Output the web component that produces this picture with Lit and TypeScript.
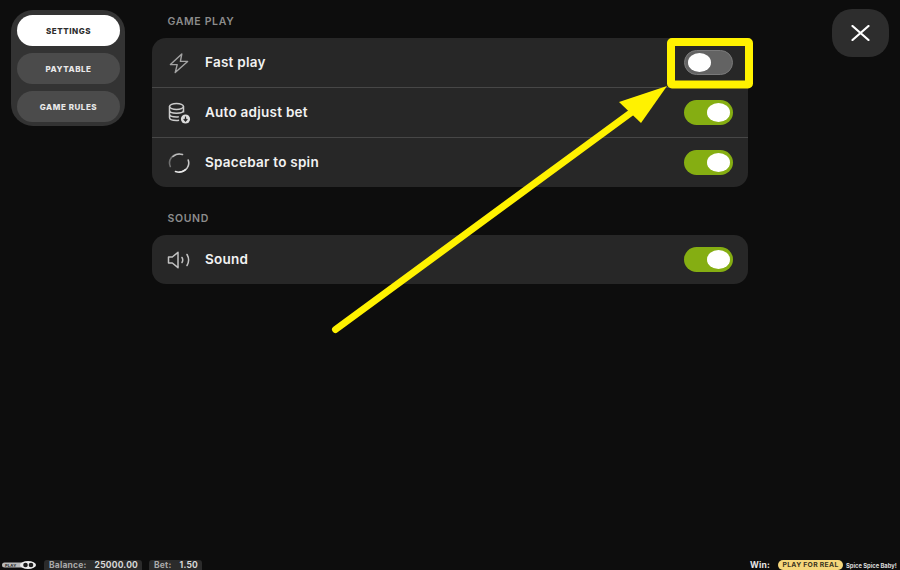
import { LitElement, html, css, svg } from "lit";
import { customElement } from "lit/decorators.js";

const boltIcon = svg`<svg class="icon" viewBox="0 0 24 24" fill="none" stroke="#a3a3a3" stroke-width="1.4" stroke-linejoin="round"><path d="M14.800 3 3.400 13.600h6.800L8.200 21.600 20.600 10.400h-7.200z"/></svg>`;
const coinsIcon = svg`<svg class="icon" viewBox="0 0 24 24" fill="none" stroke="#cccccc" stroke-width="1.500"><ellipse cx="9.500" cy="5.500" rx="7" ry="3"/><path d="M2.500 5.500v11c0 1.700 3.100 3 7 3 .9 0 1.800-.1 2.600-.2M16.500 5.500v6M2.500 9.200c0 1.700 3.100 3 7 3s7-1.300 7-3M2.500 13c0 1.700 3.100 3 7 3 .8 0 1.600-.1 2.300-.2"/><circle cx="18.500" cy="18" r="4.600" fill="#dcdcdc" stroke="none"/><path d="M18.500 15.600v4M16.700 18l1.800 2 1.800-2" stroke="#2a2a2a" stroke-width="1.200"/></svg>`;
const spinIcon = svg`<svg class="icon" viewBox="0 0 24 24" fill="none" stroke-width="1.600" stroke-linecap="round"><path d="M3.300 15.500A9.500 9 0 0 1 12 3" stroke="#707070"/><path d="M6 5.500A9.500 9 0 0 1 15.500 3.500" stroke="#bdbdbd"/><path d="M21.200 9A9.500 9 0 0 1 12.500 21" stroke="#c9c9c9"/><path d="M18.500 18.600A9.500 9 0 0 1 8.500 20.500" stroke="#e8e8e8"/></svg>`;
const soundIcon = svg`<svg class="icon" viewBox="0 0 24 24" fill="none" stroke="#c2c2c2" stroke-width="1.500" stroke-linejoin="round" stroke-linecap="round"><path d="M1.500 9v6h3.800l5.700 4.700V4.300L5.300 9z"/><path d="M15 9.500c.9 1.500.9 3.500 0 5M20 6.500c2 3.400 2 7.600 0 11"/></svg>`;
const closeIcon = svg`<svg class="close-x" viewBox="0 0 19 16" fill="none" stroke="#fff" stroke-width="2.200" stroke-linecap="round"><path d="M1.500 1 17.500 15M17.500 1 1.500 15"/></svg>`;

const logo = svg`<svg class="logo" viewBox="0 0 34 8"><rect x="0" y="1.500" width="22" height="5" rx="2.500" fill="#b9b9b9"/><text x="3" y="5.700" font-size="4" font-weight="800" fill="#333">PLAY</text><ellipse cx="26" cy="4" rx="8" ry="4" fill="#ececec"/><circle cx="23.500" cy="4" r="2.300" fill="#1c1c1c"/><circle cx="29" cy="4" r="2.300" fill="#1c1c1c"/></svg>`;

@customElement("app-root")
export class AppRoot extends LitElement {
  static styles = css`
    :host { display: block; width: 900px; height: 570px; }
    .page {
      position: relative; width: 900px; height: 570px; overflow: hidden;
      background: #0d0d0d; display: flex; flex-direction: column;
      font-family: Inter, "Liberation Sans", sans-serif; color: #fff;
    }
    .content { flex: 1; display: flex; align-items: flex-start; padding-left: 11px; min-height: 0; }
    .nav {
      width: 114px; height: 116px; margin-top: 10px; box-sizing: border-box; flex: none;
      background: #333; border-radius: 22px; padding: 5px 5px 5px 6px;
      display: flex; flex-direction: column; gap: 7px;
    }
    .nav-btn {
      height: 31px; flex: none; border-radius: 16px; background: #4b4b4b; color: #e8e8e8;
      display: flex; align-items: center; justify-content: center;
      font-size: 8px; font-weight: 800; letter-spacing: 0.55px;
    }
    .nav-btn.active { background: #fff; color: #2e2e2e; }
    .main { width: 596px; flex: none; margin-left: 27px; padding-top: 13px; }
    .heading {
      height: 17px; line-height: 17px; margin: 0 0 8px 15.500px;
      font-size: 10.500px; font-weight: 600; color: #8c8c8c; letter-spacing: 0.65px;
    }
    .heading.second { line-height: 18px; }
    .card { background: #272727; border-radius: 14px; margin-bottom: 23px; }
    .row {
      height: 49px; display: flex; align-items: center; padding: 0 15px;
      border-bottom: 1px solid #474747;
    }
    .row:last-child { border-bottom: 0; }
    .icon { width: 24px; height: 24px; flex: none; }
    .label {
      margin-left: 14px; flex: 1; padding-bottom: 2px;
      font-size: 13.500px; font-weight: 600; letter-spacing: 0.25px; color: #f2f2f2;
    }
    .toggle {
      width: 49px; height: 25px; box-sizing: border-box; border-radius: 13px; flex: none;
      padding: 3px; display: flex; background: #85ae12;
    }
    .toggle.on { justify-content: flex-end; }
    .toggle.off { background: #636363; border: 1px solid #7a7a7a; padding: 2px 3px; }
    .knob { width: 23px; height: 19px; border-radius: 50%; background: #fff; }
    .close {
      width: 57px; height: 48px; margin: 9px 0 0 84px; flex: none; border-radius: 20px;
      background: #2d2d2d; display: flex; align-items: center; justify-content: center;
    }
    .close-x { width: 19px; height: 16px; }
    .footer {
      height: 10px; flex: none; display: flex; align-items: center; padding: 0 2px;
      font-size: 8.500px; font-weight: 700; color: #d8d8d8; letter-spacing: 0.2px; white-space: nowrap;
    }
    .logo { width: 34px; height: 8px; flex: none; }
    .pill {
      height: 10px; border-radius: 3px 3px 0 0; background: #2b2b2b; margin-left: 8px;
      display: flex; align-items: center; justify-content: space-between; box-sizing: border-box; padding: 0 4px 0 5px;
    }
    .pill .k { color: #a9a9a9; }
    .balance { width: 98px; }
    .bet { width: 53px; margin-left: 7px; }
    .spacer { flex: 1; }
    .win { color: #e6e6e6; }
    .real {
      width: 65px; height: 10px; line-height: 10px; margin-left: 8px; border-radius: 5px; text-align: center;
      background: #f5d67b; color: #3a3320; font-size: 6.800px; font-weight: 700; letter-spacing: 0.3px;
    }
    .game { width: 52px; margin-left: 3px; font-size: 5.800px; color: #dcdcdc; letter-spacing: 0; }
    .overlay { position: absolute; inset: 0; width: 900px; height: 570px; pointer-events: none; }
  `;

  private row(icon: unknown, label: string, on: boolean) {
    return html`<div class="row">${icon}<span class="label">${label}</span>
      <div class="toggle ${on ? "on" : "off"}"><div class="knob"></div></div></div>`;
  }

  render() {
    return html`<div class="page">
      <div class="content">
        <nav class="nav">
          <div class="nav-btn active">SETTINGS</div>
          <div class="nav-btn">PAYTABLE</div>
          <div class="nav-btn">GAME RULES</div>
        </nav>
        <div class="main">
          <div class="heading">GAME PLAY</div>
          <div class="card">
            ${this.row(boltIcon, "Fast play", false)}
            ${this.row(coinsIcon, "Auto adjust bet", true)}
            ${this.row(spinIcon, "Spacebar to spin", true)}
          </div>
          <div class="heading second">SOUND</div>
          <div class="card">${this.row(soundIcon, "Sound", true)}</div>
        </div>
        <div class="close">${closeIcon}</div>
      </div>
      <div class="footer">
        ${logo}
        <div class="pill balance"><span class="k">Balance:</span><span>25000.00</span></div>
        <div class="pill bet"><span class="k">Bet:</span><span>1.50</span></div>
        <div class="spacer"></div>
        <span class="win">Win:</span>
        <div class="real">PLAY FOR REAL</div>
        <div class="game">Spice Spice Baby!</div>
      </div>
      <svg class="overlay" viewBox="0 0 900 570">
        <rect x="671" y="42" width="78" height="42.500" rx="1" fill="none" stroke="#fff200" stroke-width="8" stroke-linejoin="round"/>
        <line x1="335.500" y1="329.500" x2="636" y2="109" stroke="#fff200" stroke-width="7" stroke-linecap="round"/>
        <polygon points="667,86 619,102 641,123" fill="#fff200"/>
      </svg>
    </div>`;
  }
}
